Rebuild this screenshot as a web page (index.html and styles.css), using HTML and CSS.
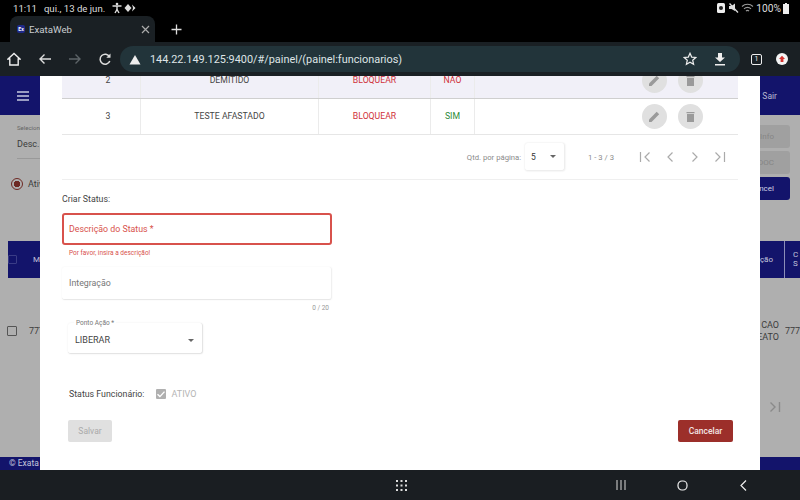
FILE: index.html
```html
<!DOCTYPE html>
<html lang="pt-BR">
<head>
    <meta charset="UTF-8">
    <meta name="viewport" content="width=device-width, initial-scale=1.0">
    <title>ExataWeb</title>
    <link rel="stylesheet" href="styles.css">
</head>
<body>
    <div class="status-bar">
        <span class="clock">11:11</span>
        <span class="date">qui., 13 de jun.</span>
        <svg class="sb-icon" width="12" height="12" viewBox="0 0 12 12"><circle cx="6" cy="2" r="1.3" fill="#ddd"/><path d="M1.5 4h9M6 4v3.5M6 7.5L4 11M6 7.5L8 11" stroke="#ddd" stroke-width="1.4" fill="none"/></svg>
        <svg class="sb-icon" width="12" height="12" viewBox="0 0 12 12"><path d="M4 2L0.5 6 4 10 7.5 6zM8 2.5L11.5 6 8 9.5 9 6z" fill="#ddd"/></svg>
        <span class="status-right">
            <svg width="10" height="12" viewBox="0 0 10 12"><rect x="1" y="1" width="8" height="10" rx="1.5" fill="#eee"/><circle cx="5" cy="6" r="2" fill="#222"/></svg>
            <svg width="11" height="12" viewBox="0 0 11 12"><path d="M1 4h2.5L7 1.5V9L3.500 7H1z" fill="#ddd"/><path d="M1.500 1.500L10 10.500" stroke="#ddd" stroke-width="1.300"/></svg>
            <svg width="13" height="12" viewBox="0 0 13 12"><path d="M1 4.500a8 8 0 0 1 11 0M3 6.800a5 5 0 0 1 7 0M5 9a2.200 2.200 0 0 1 3 0" stroke="#999" stroke-width="1.100" fill="none"/></svg>
            <span>100%</span>
            <svg width="6" height="11" viewBox="0 0 6 11"><path d="M2 0h2v1h2v10H0V1h2z" fill="#eee"/></svg>
        </span>
    </div>

    <div class="tab-strip">
        <div class="tab">
            <span class="favicon">Ex</span>
            <span class="tab-title">ExataWeb</span>
            <svg class="tab-close" width="9" height="9" viewBox="0 0 9 9"><path d="M1 1l7 7M8 1L1 8" stroke="#aaa" stroke-width="1.200"/></svg>
        </div>
        <svg class="new-tab" width="11" height="11" viewBox="0 0 11 11"><path d="M5.500 0.500v10M0.500 5.500h10" stroke="#ddd" stroke-width="1.300"/></svg>
    </div>

    <div class="toolbar">
        <svg width="14" height="14" viewBox="0 0 14 14"><path d="M1 7l6-5.500L13 7h-1.800v6H2.800V7z" fill="none" stroke="#eee" stroke-width="1.400"/></svg>
        <svg width="14" height="14" viewBox="0 0 14 14"><path d="M13 7H2M6.500 2.500L2 7l4.500 4.500" fill="none" stroke="#ddd" stroke-width="1.400"/></svg>
        <svg width="14" height="14" viewBox="0 0 14 14"><path d="M1 7h11M7.500 2.500L12 7l-4.500 4.500" fill="none" stroke="#5d6468" stroke-width="1.400"/></svg>
        <svg width="14" height="14" viewBox="0 0 14 14"><path d="M11.800 9a5 5 0 1 1-.3-4.200" fill="none" stroke="#ddd" stroke-width="1.500"/><path d="M12.500 1.500v4.200H8.300z" fill="#ddd"/></svg>
        <div class="omnibox">
            <svg width="12" height="11" viewBox="0 0 12 11"><path d="M6 1l5.500 9.500H.5z" fill="#eee"/></svg>
            <span class="url">144.22.149.125:9400/#/painel/(painel:funcionarios)</span>
            <svg class="omni-star" width="14" height="14" viewBox="0 0 14 14"><path d="M7 1.300l1.700 3.800 4.100.4-3.100 2.700.9 4.100L7 10.200l-3.600 2.100.9-4.100-3.100-2.700 4.100-.4z" fill="none" stroke="#eee" stroke-width="1.200"/></svg>
            <svg class="omni-down" width="14" height="14" viewBox="0 0 14 14"><path d="M5 1h4v4.500h3L7 10 2 5.500h3zM2 12h10v1.500H2z" fill="#eee"/></svg>
        </div>
        <span class="tab-count">1</span>
        <svg class="profile" width="12" height="12" viewBox="0 0 12 12"><circle cx="6" cy="6" r="6" fill="#f4f4f4"/><path d="M6 2.800L9 6H7.400v3H4.600V6H3z" fill="#d3332f"/></svg>
    </div>

    <div class="viewport">
        <div class="page">
            <header class="page-header">
                <svg class="menu-icon" width="12" height="10" viewBox="0 0 12 10"><path d="M0 1h12M0 5h12M0 9h12" stroke="#c6c9e0" stroke-width="1.500"/></svg>
                <span class="logout">
                    <svg width="4" height="6" viewBox="0 0 4 6"><path d="M0 0l4 3-4 3z" fill="#8f91b5"/></svg>
                    Sair
                </span>
            </header>
            <div class="filters">
                <div class="filter-left">
                    <span class="filter-label">Selecione</span>
                    <span class="filter-value">Desc.</span>
                    <div class="radio-row">
                        <span class="radio"></span>
                        <span>Ativo</span>
                    </div>
                </div>
                <div class="filter-right">
                    <span class="bg-btn">Info</span>
                    <span class="bg-btn">DOC</span>
                    <span class="bg-btn bg-btn-navy">Cancel</span>
                </div>
            </div>
            <div class="bg-table-head">
                <span class="bg-check"></span>
                <span class="bg-head-m">M</span>
                <span class="bg-head-acao">ção</span>
                <span class="bg-head-last">C<br>S</span>
            </div>
            <div class="bg-table-row">
                <span class="bg-check bg-check-row"></span>
                <span>777</span>
                <span class="bg-row-acao">CAO<br>EATO</span>
                <span class="bg-row-last">777</span>
            </div>
            <div class="bg-pager">
                <svg width="12" height="12" viewBox="0 0 12 12"><path d="M1.500 1.500L6 6l-4.500 4.500M10.500 1v10" fill="none" stroke="#8a8a8a" stroke-width="1.400"/></svg>
            </div>
            <footer class="page-footer">© Exata</footer>
        </div>

        <div class="modal">
            <div class="status-table">
                <div class="table-row row-alt">
                    <span class="cell cell-id">2</span>
                    <span class="cell cell-name">DEMITIDO</span>
                    <span class="cell cell-action txt-red">BLOQUEAR</span>
                    <span class="cell cell-flag txt-red">NÃO</span>
                    <span class="cell cell-tools">
                        <span class="round-btn"><svg width="13" height="13" viewBox="0 0 13 13"><path d="M1 12V9.500L8.700 1.800l2.500 2.500L3.500 12z" fill="#9a9a9a"/></svg></span>
                        <span class="round-btn"><svg width="13" height="13" viewBox="0 0 13 13"><path d="M3 4h7v8H3zM2.500 2h8v1.200h-8z" fill="#9a9a9a"/></svg></span>
                    </span>
                </div>
                <div class="table-row">
                    <span class="cell cell-id">3</span>
                    <span class="cell cell-name">TESTE AFASTADO</span>
                    <span class="cell cell-action txt-red">BLOQUEAR</span>
                    <span class="cell cell-flag txt-green">SIM</span>
                    <span class="cell cell-tools">
                        <span class="round-btn"><svg width="13" height="13" viewBox="0 0 13 13"><path d="M1 12V9.500L8.700 1.800l2.500 2.500L3.500 12z" fill="#9a9a9a"/></svg></span>
                        <span class="round-btn"><svg width="13" height="13" viewBox="0 0 13 13"><path d="M3 4h7v8H3zM2.500 2h8v1.200h-8z" fill="#9a9a9a"/></svg></span>
                    </span>
                </div>
            </div>

            <div class="paginator">
                <span class="page-size-label">Qtd. por página:</span>
                <span class="page-size"><span>5</span><i class="caret"></i></span>
                <span class="page-range">1 - 3 / 3</span>
                <span class="page-arrows">
                    <svg width="12" height="12" viewBox="0 0 12 12"><path d="M1.500 1v10M10.500 1.500L6 6l4.500 4.500" fill="none" stroke="#aaa" stroke-width="1.200"/></svg>
                    <svg width="12" height="12" viewBox="0 0 12 12"><path d="M8.500 1.500L4 6l4.500 4.500" fill="none" stroke="#aaa" stroke-width="1.200"/></svg>
                    <svg width="12" height="12" viewBox="0 0 12 12"><path d="M3.500 1.500L8 6l-4.500 4.500" fill="none" stroke="#aaa" stroke-width="1.200"/></svg>
                    <svg width="12" height="12" viewBox="0 0 12 12"><path d="M1.500 1.500L6 6l-4.500 4.500M10.500 1v10" fill="none" stroke="#aaa" stroke-width="1.200"/></svg>
                </span>
            </div>

            <h2 class="form-title">Criar Status:</h2>

            <div class="field field-error">Descrição do Status *</div>
            <div class="field-msg">Por favor, insira a descrição!</div>

            <div class="field field-plain">Integração</div>
            <div class="field-count">0 / 20</div>

            <div class="select-box">
                <span class="select-label">Ponto Ação *</span>
                <span>LIBERAR</span>
                <i class="caret"></i>
            </div>

            <div class="status-line">
                <span>Status Funcionário:</span>
                <span class="checkbox"><svg width="10" height="10" viewBox="0 0 10 10"><path d="M1.500 5.200l2.400 2.400 4.600-5" fill="none" stroke="#fff" stroke-width="1.400"/></svg></span>
                <span class="check-text">ATIVO</span>
            </div>

            <div class="form-actions">
                <button class="btn btn-disabled">Salvar</button>
                <button class="btn btn-cancel">Cancelar</button>
            </div>
        </div>
    </div>

    <div class="nav-bar">
        <svg class="nav-grid" width="11" height="11" viewBox="0 0 11 11"><g fill="#ddd"><rect x="0" y="0" width="2" height="2"/><rect x="4.500" y="0" width="2" height="2"/><rect x="9" y="0" width="2" height="2"/><rect x="0" y="4.500" width="2" height="2"/><rect x="4.500" y="4.500" width="2" height="2"/><rect x="9" y="4.500" width="2" height="2"/><rect x="0" y="9" width="2" height="2"/><rect x="4.500" y="9" width="2" height="2"/><rect x="9" y="9" width="2" height="2"/></g></svg>
        <svg class="nav-recent" width="10" height="10" viewBox="0 0 10 10"><path d="M1 0v10M5 0v10M9 0v10" stroke="#bbb" stroke-width="1.200"/></svg>
        <svg class="nav-home" width="11" height="11" viewBox="0 0 11 11"><rect x="1" y="1" width="9" height="9" rx="4" fill="none" stroke="#eee" stroke-width="1.200"/></svg>
        <svg class="nav-back" width="7" height="11" viewBox="0 0 7 11"><path d="M6 0.500L1 5.500l5 5" fill="none" stroke="#eee" stroke-width="1.200"/></svg>
    </div>
</body>
</html>
```

FILE: styles.css
```css
* {
    box-sizing: border-box;
}
body {
    margin: 0;
    width: 800px;
    height: 500px;
    overflow: hidden;
    display: flex;
    flex-direction: column;
    font-family: 'Roboto', 'Liberation Sans', sans-serif;
    background: #000;
}

/* android status bar + chrome */
.status-bar {
    height: 16px;
    flex: none;
    display: flex;
    align-items: center;
    padding: 0 11px 0 13px;
    font-size: 9.6px;
    color: #ddd;
    background: #000;
}
.clock {
    margin-right: 7px;
}
.date {
    margin-right: 6px;
}
.sb-icon {
    margin-right: 1px;
}
.status-right {
    margin-left: auto;
    display: flex;
    align-items: center;
    gap: 2px;
    font-size: 10.2px;
}
.tab-strip {
    height: 26px;
    flex: none;
    display: flex;
    align-items: center;
    padding-left: 10px;
    background: #000;
}
.tab {
    width: 145px;
    height: 26px;
    display: flex;
    align-items: center;
    padding: 0 5px 0 7px;
    background: #1a2024;
    border-radius: 8px 8px 0 0;
    color: #c8cdd0;
    font-size: 9.7px;
}
.favicon {
    width: 8px;
    height: 8px;
    margin-right: 4px;
    border-radius: 2px;
    background: #1f2a8a;
    color: #fff;
    font-size: 5px;
    font-weight: 700;
    line-height: 8px;
    text-align: center;
}
.tab-close {
    margin-left: auto;
}
.new-tab {
    margin-left: 16px;
}
.toolbar {
    height: 34px;
    flex: none;
    display: flex;
    align-items: center;
    padding-left: 7px;
    background: #1a2024;
}
.toolbar > svg:nth-child(2) {
    margin-left: 17px;
}
.toolbar > svg:nth-child(3) {
    margin-left: 16px;
}
.toolbar > svg:nth-child(4) {
    margin-left: 16px;
}
.omnibox {
    width: 620px;
    height: 26px;
    margin-left: 8px;
    display: flex;
    align-items: center;
    padding: 0 13px 0 9px;
    background: #22343a;
    border-radius: 13px;
    color: #dfe4e6;
}
.url {
    margin-left: 9px;
    font-size: 10.9px;
}
.omni-star {
    margin-left: auto;
}
.omni-down {
    margin-left: 16px;
}
.tab-count {
    width: 11px;
    height: 11px;
    margin-left: 11px;
    border: 1px solid #eee;
    border-radius: 2px;
    color: #eee;
    font-size: 7px;
    line-height: 9px;
    text-align: center;
}
.profile {
    margin-left: 14px;
}

/* app behind the dialog */
.viewport {
    height: 394px;
    flex: none;
    position: relative;
    overflow: hidden;
}
.page {
    height: 100%;
    display: flex;
    flex-direction: column;
    background: #afafaf;
    color: #3c3c3c;
    font-size: 9px;
}
.page-header {
    height: 39px;
    flex: none;
    display: flex;
    align-items: center;
    justify-content: space-between;
    padding: 0 17px;
    background: #13146b;
}
.logout {
    color: #b9bbd2;
    font-size: 8.5px;
    margin-right: 6px;
}
.filters {
    height: 126px;
    flex: none;
    display: flex;
    justify-content: space-between;
}
.filter-left {
    width: 40px;
    padding: 9px 0 0 17px;
    display: flex;
    flex-direction: column;
    white-space: nowrap;
}
.filter-label {
    font-size: 6px;
    color: #666;
}
.filter-value {
    margin-top: 8px;
    padding-bottom: 9px;
    border-bottom: 1px solid #999;
    font-size: 9px;
}
.radio-row {
    margin: 19px 0 0 -6px;
    display: flex;
    align-items: center;
    gap: 5px;
}
.radio {
    flex: none;
    width: 12px;
    height: 12px;
    border: 1.5px solid #6e2a24;
    border-radius: 50%;
    background: radial-gradient(circle, #6e2a24 3px, transparent 3.500px);
}
.filter-right {
    width: 40px;
    padding-top: 10px;
    display: flex;
    flex-direction: column;
    gap: 3px;
}
.bg-btn {
    width: 30px;
    height: 23px;
    display: flex;
    align-items: center;
    justify-content: flex-end;
    padding-right: 16px;
    white-space: nowrap;
    background: #a0a0a0;
    border-radius: 0 3px 3px 0;
    color: #858585;
    font-size: 8px;
}
.bg-btn-navy {
    background: #13146b;
    color: #cfd0e4;
}
.bg-table-head {
    height: 37px;
    flex: none;
    display: flex;
    align-items: center;
    margin-left: 8px;
    background: #13146b;
    color: #c4c6dc;
    font-size: 8px;
}
.bg-check {
    width: 9px;
    height: 9px;
    border: 1.5px solid #3a3c86;
    border-radius: 1px;
}
.bg-head-m {
    margin-left: 16px;
}
.bg-head-acao {
    margin-left: auto;
    margin-right: 11px;
}
.bg-head-last {
    width: 16px;
    height: 100%;
    padding: 9px 0 0 8px;
    border-left: 1px solid #8c8eb8;
}
.bg-table-row {
    height: 105px;
    flex: none;
    display: flex;
    align-items: center;
    padding-left: 7px;
    gap: 12px;
    font-size: 9px;
    white-space: nowrap;
}
.bg-check-row {
    width: 10px;
    height: 10px;
    border-color: #555;
}
.bg-row-acao {
    margin-left: auto;
    margin-right: -6px;
    width: 24px;
    padding-top: 1px;
    line-height: 12px;
    text-align: right;
}
.bg-row-last {
    width: 15px;
    overflow: hidden;
}
.bg-pager {
    height: 12px;
    margin: 18px 19px 0 auto;
}
.page-footer {
    height: 13px;
    margin-top: auto;
    padding-left: 9px;
    background: #13146b;
    color: #c4c6dc;
    font-size: 8.5px;
    line-height: 13px;
}

/* dialog */
.modal {
    position: absolute;
    left: 40px;
    top: 0;
    width: 720px;
    height: 394px;
    overflow: hidden;
    padding: 0 22px;
    background: #fff;
    color: #444;
    font-size: 8.7px;
}
.status-table {
    margin-top: -13px;
}
.table-row {
    height: 36px;
    display: flex;
    align-items: center;
    border-bottom: 1px solid #e6e6e6;
}
.row-alt {
    background: #f1f0f8;
    border-bottom-color: #cfcfcf;
}
.cell {
    height: 100%;
    display: flex;
    align-items: center;
    justify-content: center;
    padding-bottom: 1px;
    border-right: 1px solid #ebebeb;
}
.cell-id {
    width: 79px;
    padding-left: 14px;
}
.cell-name {
    width: 178px;
}
.cell-action {
    width: 112px;
}
.cell-flag {
    width: 44px;
}
.cell-tools {
    flex: 1;
    justify-content: flex-end;
    gap: 11px;
    padding: 0 35px 0 0;
    border-right: none;
}
.txt-red {
    color: #d0313a;
}
.txt-green {
    color: #2c8a36;
}
.round-btn {
    width: 25px;
    height: 25px;
    display: flex;
    align-items: center;
    justify-content: center;
    border-radius: 50%;
    background: #e0e0e0;
}
.paginator {
    height: 45px;
    display: flex;
    align-items: center;
    justify-content: flex-end;
    padding-right: 12px;
    border-bottom: 1px solid #efefef;
    color: #8a8a8a;
    font-size: 7.7px;
}
.page-size {
    width: 40px;
    height: 28px;
    margin-left: 4px;
    display: flex;
    align-items: center;
    justify-content: space-between;
    padding: 0 8px 0 6px;
    border-right: 1px solid #eee;
    border-bottom: 1px solid #eee;
    border-radius: 3px;
    box-shadow: 0 0 2px rgba(0, 0, 0, 0.12);
    color: #333;
    font-size: 8.5px;
}
.page-range {
    margin-left: 23px;
}
.page-arrows {
    margin-left: 25px;
    display: flex;
    gap: 13px;
}
.caret {
    display: block;
    width: 0;
    height: 0;
    border-left: 3.500px solid transparent;
    border-right: 3.500px solid transparent;
    border-top: 3.500px solid #666;
}
.form-title {
    margin: 13px 0 8px;
    font-size: 8.8px;
    font-weight: 400;
    line-height: 12px;
}
.field {
    width: 270px;
    display: flex;
    align-items: center;
    padding-left: 7px;
    border-radius: 3px;
    font-size: 8.8px;
}
.field-error {
    height: 32px;
    border: 2px solid #d8524c;
    color: #d8524c;
    padding-left: 5px;
}
.field-msg {
    height: 22px;
    padding: 4px 0 0 7px;
    color: #d8524c;
    font-size: 6.5px;
}
.field-plain {
    height: 33px;
    border-right: 1px solid #f0f0f0;
    border-bottom: 1px solid #e8e8e8;
    box-shadow: 0 0 2px rgba(0, 0, 0, 0.06);
    color: #777;
}
.field-count {
    width: 270px;
    height: 23px;
    padding: 4px 3px 0 0;
    color: #999;
    font-size: 6.5px;
    text-align: right;
}
.select-box {
    position: relative;
    width: 135px;
    height: 31px;
    margin-left: 6px;
    display: flex;
    align-items: center;
    justify-content: space-between;
    padding: 4px 8px 0 7px;
    border-right: 1px solid #e4e4e4;
    border-bottom: 1px solid #e4e4e4;
    border-radius: 3px;
    box-shadow: 0 0 2px rgba(0, 0, 0, 0.08);
    font-size: 9px;
}
.select-label {
    position: absolute;
    top: -4px;
    left: 6px;
    padding: 0 2px;
    background: #fff;
    color: #777;
    font-size: 6.5px;
}
.status-line {
    margin: 32px 0 0 7px;
    display: flex;
    align-items: center;
    height: 16px;
    font-size: 8.8px;
}
.checkbox {
    width: 10px;
    height: 10px;
    margin-left: 12px;
    display: flex;
    background: #b0b0b0;
    border-radius: 1px;
}
.check-text {
    margin-left: 5px;
    color: #b5b5b5;
    font-size: 9px;
}
.form-actions {
    margin: 18px 5px 0 6px;
    display: flex;
    justify-content: space-between;
}
.btn {
    height: 22px;
    border: none;
    border-radius: 2px;
    font-family: inherit;
    font-size: 8.5px;
}
.btn-disabled {
    width: 44px;
    background: #e0e0e0;
    color: #aaa;
}
.btn-cancel {
    width: 55px;
    background: #9c2f2a;
    color: #f3e6e5;
    font-weight: 500;
}

/* android nav */
.nav-bar {
    height: 30px;
    flex: none;
    display: flex;
    align-items: center;
    background: #1a1e22;
}
.nav-grid {
    margin-left: 396px;
}
.nav-recent {
    margin-left: 209px;
}
.nav-home {
    margin-left: 51px;
}
.nav-back {
    margin-left: 52px;
}
```
